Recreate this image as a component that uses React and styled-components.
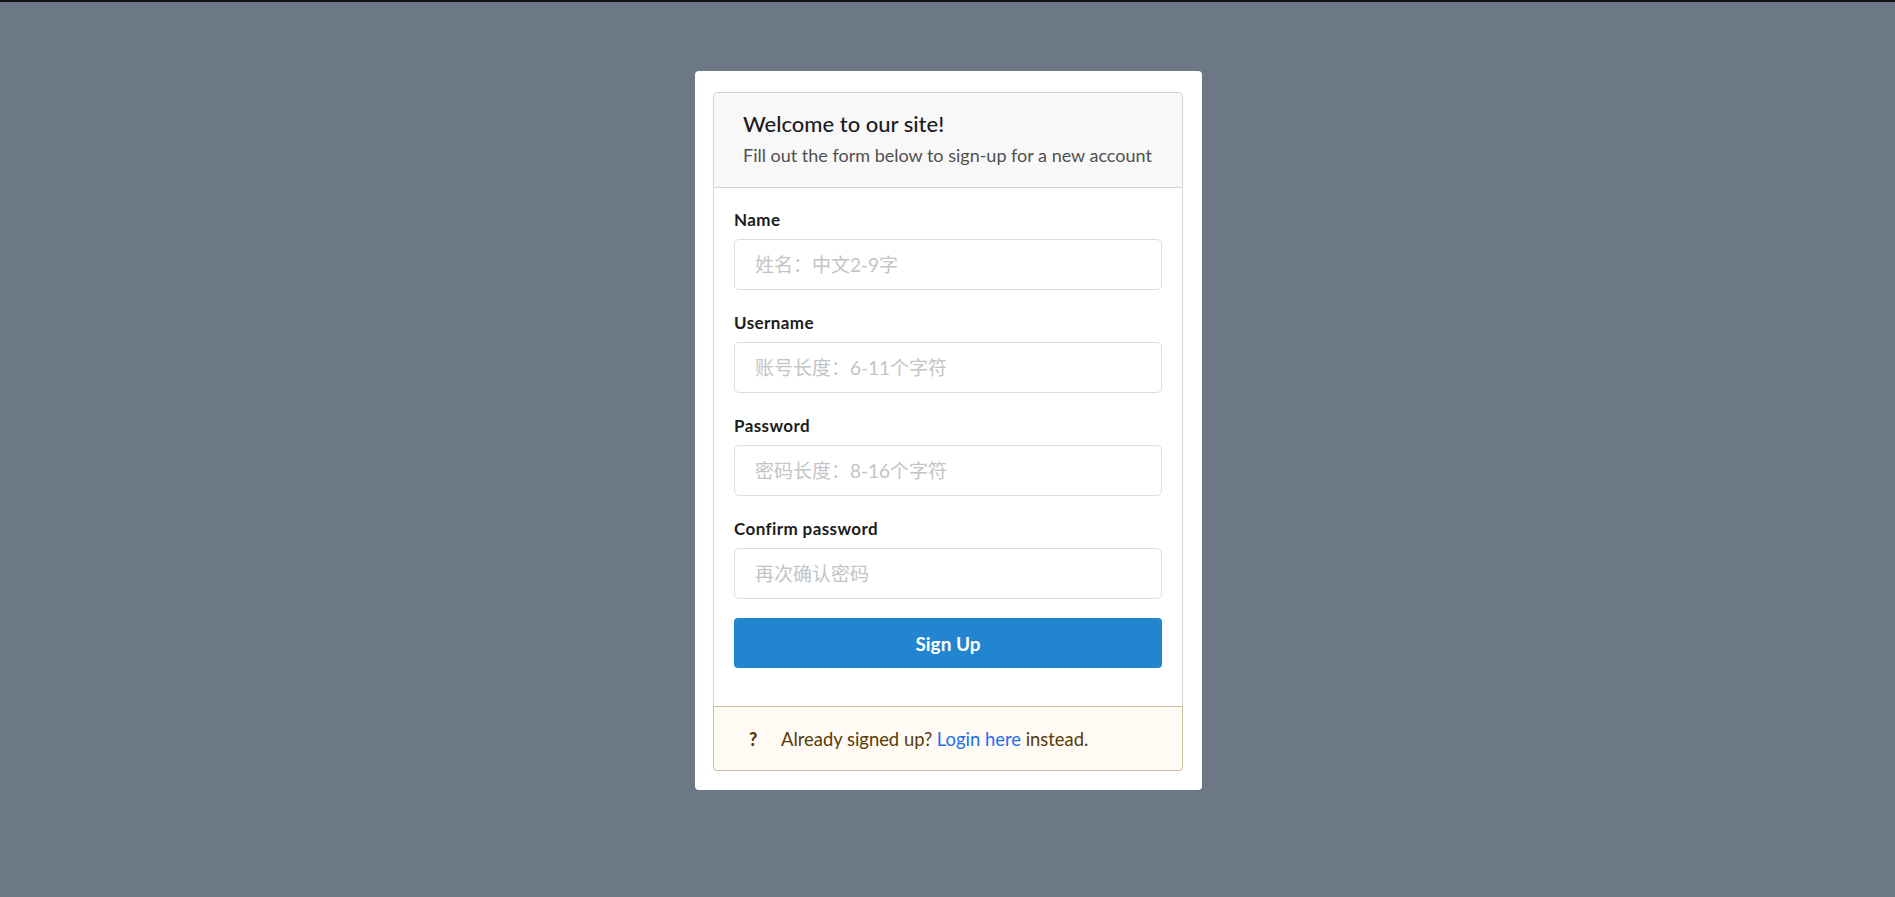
import styled, { createGlobalStyle } from 'styled-components'

const GlobalStyle = createGlobalStyle`
  html, body {
    margin: 0;
    padding: 0;
    background-color: #6c7885;
    font-family: Lato, "Noto Sans CJK SC", "Noto Sans", sans-serif;
  }
  * {
    box-sizing: border-box;
  }
`

const TopBar = styled.div`
  height: 2px;
  background-color: #111111;
`

const Page = styled.div`
  display: flex;
  justify-content: center;
  align-items: flex-start;
  padding: 69px 0 0 2px;
  min-height: 895px;
`

const Card = styled.div`
  width: 507px;
  background-color: #ffffff;
  border-radius: 4px;
  padding: 21px 19px 19px 18px;
`

const Header = styled.div`
  height: 96px;
  background-color: #f8f8f9;
  border: 1px solid #d4d4d5;
  border-radius: 4px 4px 0 0;
  padding: 18px 28px 0 29px;
  color: #1b1c1d;
  h2 {
    margin: 0 0 7px;
    font-size: 22px;
    line-height: 26px;
    font-weight: 500;
  }
  p {
    margin: 0;
    font-size: 18px;
    line-height: 22px;
    color: #505050;
  }
`

const Segment = styled.form`
  border-left: 1px solid #d4d4d5;
  border-right: 1px solid #d4d4d5;
  padding: 22px 20px 38px 20px;
  display: flex;
  flex-direction: column;
  gap: 23px;
`

const Field = styled.div`
  display: flex;
  flex-direction: column;
  label {
    font-size: 17px;
    line-height: 20px;
    font-weight: 700;
    letter-spacing: 0.4px;
    color: #1b1c1d;
    margin-bottom: 9px;
  }
`

const Input = styled.input`
  height: 51px;
  width: 100%;
  border: 1px solid #dedede;
  border-radius: 5px;
  padding: 0 20px;
  font-family: Lato, "Noto Sans CJK SC", sans-serif;
  font-size: 19px;
  color: #333333;
  outline: none;
  &::placeholder {
    color: #c4c4c4;
  }
`

const Button = styled.button`
  margin-top: -4px;
  height: 50px;
  border: none;
  border-radius: 4px;
  background-color: #2185d0;
  color: #ffffff;
  font-family: Lato, sans-serif;
  font-size: 19px;
  font-weight: 700;
  cursor: pointer;
`

const Footer = styled.div`
  height: 65px;
  display: flex;
  align-items: center;
  background-color: #fffaf3;
  border: 1px solid #c9ba9b;
  border-radius: 0 0 4px 4px;
  padding: 0 0 0 35px;
  color: #573a08;
  font-size: 18.4px;
  a {
    color: #1e6fef;
    text-decoration: none;
  }
`

const HelpIcon = styled.span`
  width: 10px;
  font-weight: 900;
  font-size: 18px;
  margin-right: 22px;
  color: #573a08;
`

const fields = [
  { label: 'Name', placeholder: '姓名：中文2-9字', type: 'text' },
  { label: 'Username', placeholder: '账号长度：6-11个字符', type: 'text' },
  { label: 'Password', placeholder: '密码长度：8-16个字符', type: 'password' },
  { label: 'Confirm password', placeholder: '再次确认密码', type: 'password' },
]

export default function App() {
  return (
    <>
      <GlobalStyle />
      <TopBar />
      <Page>
        <Card>
          <Header>
            <h2>Welcome to our site!</h2>
            <p>Fill out the form below to sign-up for a new account</p>
          </Header>
          <Segment onSubmit={(e) => e.preventDefault()}>
            {fields.map((f) => (
              <Field key={f.label}>
                <label>{f.label}</label>
                <Input type={f.type} placeholder={f.placeholder} />
              </Field>
            ))}
            <Button type="submit">Sign Up</Button>
          </Segment>
          <Footer>
            <HelpIcon>?</HelpIcon>
            <span>
              Already signed up? <a href="#login">Login here</a> instead.
            </span>
          </Footer>
        </Card>
      </Page>
    </>
  )
}
